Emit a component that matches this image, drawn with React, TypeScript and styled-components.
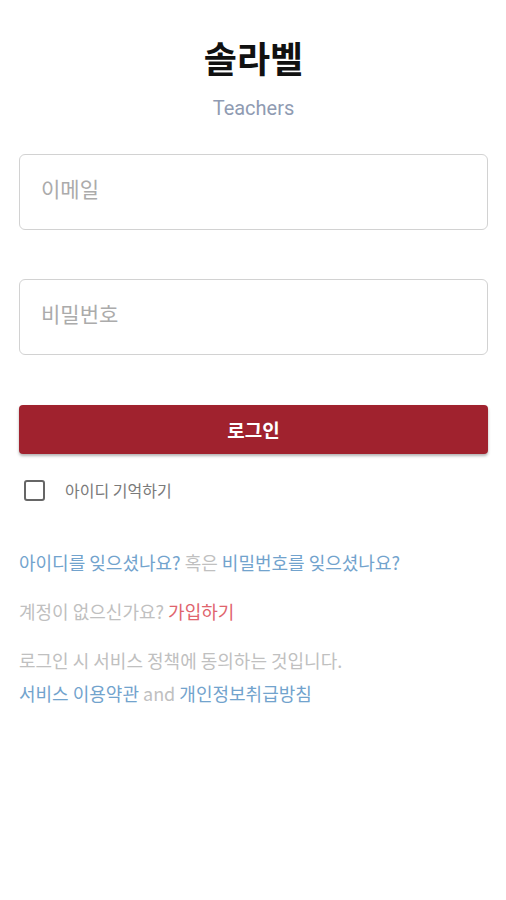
import React, { useState } from "react";
import styled, { createGlobalStyle } from "styled-components";

const GlobalStyle = createGlobalStyle`
  html, body {
    margin: 0;
    padding: 0;
    background: #ffffff;
  }
  body {
    font-family: "Noto Sans CJK KR", Roboto, "Noto Sans", sans-serif;
  }
`;

const Page = styled.div`
  width: 506px;
  min-height: 900px;
  box-sizing: border-box;
  padding: 34px 18px 0 19px;
  display: flex;
  flex-direction: column;
`;

const Header = styled.div`
  display: flex;
  flex-direction: column;
  align-items: center;
  margin-bottom: 34px;
`;

const Title = styled.h1`
  margin: 0;
  font-size: 36px;
  line-height: 46px;
  font-weight: 700;
  color: #111111;
`;

const Subtitle = styled.div`
  margin-top: 16px;
  font-family: Roboto, "Noto Sans CJK KR", sans-serif;
  font-size: 20px;
  line-height: 24px;
  color: #8f9bb2;
`;

const Fields = styled.div`
  display: flex;
  flex-direction: column;
  gap: 49px;
`;

const Input = styled.input`
  box-sizing: border-box;
  width: 100%;
  height: 76px;
  padding: 0 21px 8px;
  border: 1.5px solid #d2d2d2;
  border-radius: 6px;
  font-family: "Noto Sans CJK KR", sans-serif;
  font-size: 21px;
  color: #333333;
  outline: none;
  &::placeholder {
    color: #ababab;
  }
`;

const LoginButton = styled.button`
  margin-top: 50px;
  height: 49px;
  width: 100%;
  border: none;
  border-radius: 4px;
  background: #a0222e;
  color: #ffffff;
  font-family: "Noto Sans CJK KR", sans-serif;
  font-size: 19px;
  font-weight: 700;
  box-shadow: 0 2px 3px rgba(0, 0, 0, 0.3);
  cursor: pointer;
`;

const RememberRow = styled.label`
  margin-top: 25px;
  display: flex;
  align-items: center;
  gap: 20px;
  padding-left: 5px;
  height: 22px;
  font-size: 16px;
  color: #7a7a7a;
  cursor: pointer;
`;

const Box = styled.span<{ checked: boolean }>`
  box-sizing: border-box;
  width: 21px;
  height: 21px;
  border: 2px solid #666666;
  border-radius: 3px;
  background: ${(p) => (p.checked ? "#666666" : "transparent")};
`;

const Texts = styled.div`
  margin-top: 49px;
  display: flex;
  flex-direction: column;
  font-size: 18px;
  line-height: 24px;
`;

const Line = styled.div<{ gap: number }>`
  margin-top: ${(p) => p.gap}px;
  color: #c0c0c0;
  white-space: nowrap;
`;

const Link = styled.a<{ tone?: "blue" | "red" }>`
  color: ${(p) => (p.tone === "red" ? "#e0646d" : "#72a3cd")};
  text-decoration: none;
`;

const Plain = styled.span`
  color: #c0c0c0;
`;

export default function App() {
  const [remember, setRemember] = useState(false);

  return (
    <>
      <GlobalStyle />
      <Page>
        <Header>
          <Title>솔라벨</Title>
          <Subtitle>Teachers</Subtitle>
        </Header>
        <Fields>
          <Input placeholder="이메일" />
          <Input placeholder="비밀번호" type="password" />
        </Fields>
        <LoginButton>로그인</LoginButton>
        <RememberRow onClick={() => setRemember(!remember)}>
          <Box checked={remember} />
          아이디 기억하기
        </RememberRow>
        <Texts>
          <Line gap={0}>
            <Link tone="blue">아이디를 잊으셨나요?</Link> <Plain>혹은</Plain>{" "}
            <Link tone="blue">비밀번호를 잊으셨나요?</Link>
          </Line>
          <Line gap={25}>
            계정이 없으신가요? <Link tone="red">가입하기</Link>
          </Line>
          <Line gap={25}>로그인 시 서비스 정책에 동의하는 것입니다.</Line>
          <Line gap={9}>
            <Link tone="blue">서비스 이용약관</Link> <Plain>and</Plain>{" "}
            <Link tone="blue">개인정보취급방침</Link>
          </Line>
        </Texts>
      </Page>
    </>
  );
}
